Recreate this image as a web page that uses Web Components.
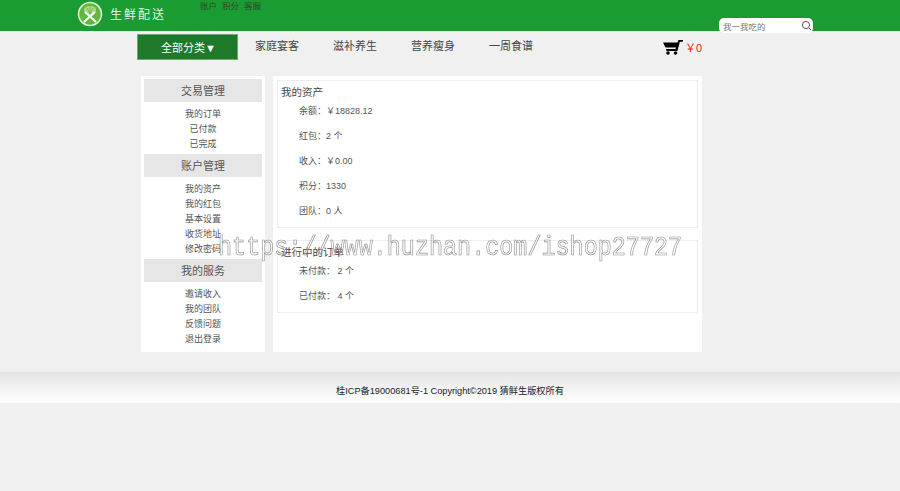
<!DOCTYPE html>
<html lang="zh"><head><meta charset="utf-8"><title>生鲜配送</title>
<style>
html,body{margin:0;padding:0;background:#f0f0f0;}
body{font-family:"Liberation Sans","Noto Sans CJK SC",sans-serif;color:#333;height:491px;overflow:hidden;position:relative;}
</style></head><body>
<site-header></site-header>
<site-nav></site-nav>
<account-page></account-page>
<site-footer></site-footer>
<water-mark>https://www.huzhan.com/ishop27727</water-mark>
<script>
const FONT='"Liberation Sans","Noto Sans CJK SC",sans-serif';
function def(name,html){
  customElements.define(name,class extends HTMLElement{
    constructor(){super();this.attachShadow({mode:'open'}).innerHTML=html;}
  });
}
def('site-header',`<style>
:host{display:flex;height:31px;background:#1a9c33;position:relative;font-family:${FONT};}
.logo{display:flex;align-items:center;gap:7px;margin-left:77px;width:123px;height:28px;color:#e4f4e4;font:12px/28px "Noto Sans CJK SC",sans-serif;letter-spacing:2px;}
.links{font-size:8.500px;color:#2b4a2b;line-height:12px;display:flex;gap:5px;width:519px;}
.search{display:flex;align-items:center;justify-content:space-between;box-sizing:border-box;width:94px;height:15px;margin-top:18px;padding:0 1px 0 4px;background:#fff;border-radius:5px;font-size:8.500px;color:#777;}
</style>
<div class="logo"><svg width="26" height="26" viewBox="0 0 26 26"><circle cx="13" cy="13" r="11.500" fill="#5fb83e" stroke="#e8f5e0" stroke-width="1.500"/><path d="M7 9c0-3 3-4 6-4s6 1 6 4c0 3-3 5-6 6-3-1-6-3-6-6z" fill="#a7d98a"/><path d="M10 7l3 6 3-6M13 5v8" stroke="#5fb83e" fill="none" stroke-width=".8"/><path d="M7 21 18 11M19 21 8 11" stroke="#fff" stroke-width="2"/></svg><span>生鲜配送</span></div>
<div class="links"><span>账户</span><span>积分</span><span>客服</span></div>
<div class="search"><span>我一我吃的</span><svg width="11" height="11" viewBox="0 0 11 11" fill="none" stroke="#555"><circle cx="5" cy="5" r="3.600"/><path d="M8 8l2 2"/></svg></div>`);
def('site-nav',`<style>
:host{display:flex;align-items:center;height:26px;margin-top:3px;padding-left:137px;font-family:${FONT};font-size:11px;color:#444;}
.all{box-sizing:border-box;width:101px;height:26px;background:#1e7a2a;border:1px solid #6aa873;color:#fff;display:flex;align-items:center;justify-content:center;font-size:11px;margin-right:17px;padding-left:2px;}
.i{width:78px;line-height:24px;height:26px;}
.i.last{width:174px;}
.cart{display:flex;align-items:center;gap:2px;color:#e8211d;font-size:11px;}
</style>
<div class="all">全部分类▼</div>
<span class="i">家庭宴客</span><span class="i">滋补养生</span><span class="i">营养瘦身</span><span class="i last">一周食谱</span>
<div class="cart"><svg width="20" height="15" viewBox="0 0 20 15"><path d="M0 2.500h14.500L15.500 0H20v1.800h-3.200L14.500 11H3.500L3 9h9.500l.5-1.500H2.500z" fill="#000"/><circle cx="5" cy="13" r="1.800"/><circle cx="12.500" cy="13" r="1.800"/></svg><span>￥0</span></div>`);
def('account-page',`<style>
:host{display:flex;gap:8px;margin:16px 0 0 141px;width:561px;height:276px;font-family:${FONT};}
.side{width:124px;background:#fff;padding-top:3px;box-sizing:border-box;}
.main{width:429px;background:#fff;box-sizing:border-box;padding:4px 4px 0;display:flex;flex-direction:column;gap:12px;}
</style>
<div class="side">
<side-group title="交易管理"><span>我的订单</span><span>已付款</span><span>已完成</span></side-group>
<side-group title="账户管理"><span>我的资产</span><span>我的红包</span><span>基本设置</span><span>收货地址</span><span>修改密码</span></side-group>
<side-group title="我的服务"><span>邀请收入</span><span>我的团队</span><span>反馈问题</span><span>退出登录</span></side-group>
</div>
<div class="main">
<info-box title="我的资产" h="148"><span>余额：￥18828.12</span><span>红包：2 个</span><span>收入：￥0.00</span><span>积分：1330</span><span>团队：0 人</span></info-box>
<info-box title="进行中的订单" h="73"><span>未付款： 2 个</span><span>已付款： 4 个</span></info-box>
</div>`);
customElements.define('side-group',class extends HTMLElement{
  constructor(){super();const s=this.attachShadow({mode:'open'});
  s.innerHTML=`<style>
:host{display:block;font-size:9px;color:#555;text-align:center;}
h3{margin:0 3px;height:23px;background:#e6e6e6;font:normal 11px/25px ${FONT};color:#555;}
.l{display:flex;flex-direction:column;padding:5px 0 2px;line-height:15px;}
::slotted(span){display:block;height:15px;}
</style><h3></h3><div class="l"><slot></slot></div>`;
  s.querySelector('h3').textContent=this.getAttribute('title');}
});
customElements.define('info-box',class extends HTMLElement{
  constructor(){super();const s=this.attachShadow({mode:'open'});
  s.innerHTML=`<style>
:host{display:block;box-sizing:border-box;border:1px solid #eee;height:${this.getAttribute('h')}px;font-size:9px;color:#555;}
h4{margin:0;font:normal 10.500px/14px ${FONT};color:#444;padding:4px 0 0 3px;}
.l{padding:5px 0 0 21px;display:flex;flex-direction:column;gap:10px;}
::slotted(span){display:block;height:15px;line-height:15px;}
</style><h4></h4><div class="l"><slot></slot></div>`;
  s.querySelector('h4').textContent=this.getAttribute('title');}
});
def('site-footer',`<style>
:host{display:block;margin-top:20px;height:31px;background:linear-gradient(#e4e4e4,#f2f2f2 50%,#fff);text-align:center;font:9.200px/38px ${FONT};color:#222;}
</style><slot>桂ICP备19000681号-1 Copyright©2019 猜鲜生版权所有</slot>`);
def('water-mark',`<style>
:host{position:absolute;left:218px;top:232px;font:28px/32px "Liberation Mono",monospace;color:rgba(255,255,255,.3);-webkit-text-stroke:.7px #8f8f8f;white-space:nowrap;transform:scaleX(.837);transform-origin:0 0;filter:grayscale(1);}
</style><slot></slot>`);
</script>
</body></html>
